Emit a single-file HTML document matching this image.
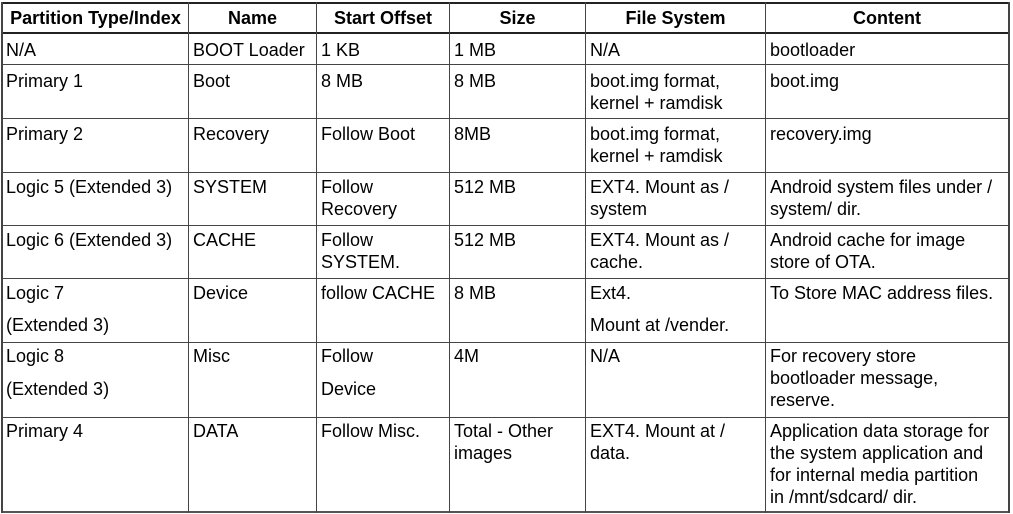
<!DOCTYPE html>
<html><head><meta charset="utf-8"><style>
html,body{margin:0;padding:0;background:#fff;}
body{width:1013px;height:514px;position:relative;overflow:hidden;font-family:"Liberation Sans",Arial,sans-serif;font-size:18px;line-height:22px;color:#000;}
.h{position:absolute;background:#222;}
.t{position:absolute;white-space:nowrap;}
.b{font-weight:bold;text-align:center;}
</style></head><body>
<div class="h" style="left:1px;top:2px;width:1009px;height:2px"></div>
<div class="h" style="left:1px;top:32px;width:1009px;height:2px"></div>
<div class="h" style="left:1px;top:64px;width:1009px;height:1px;background:#444"></div>
<div class="h" style="left:1px;top:118px;width:1009px;height:1px;background:#444"></div>
<div class="h" style="left:1px;top:172px;width:1009px;height:1px;background:#444"></div>
<div class="h" style="left:1px;top:225px;width:1009px;height:1px;background:#444"></div>
<div class="h" style="left:1px;top:278px;width:1009px;height:1px;background:#444"></div>
<div class="h" style="left:1px;top:342px;width:1009px;height:1px;background:#444"></div>
<div class="h" style="left:1px;top:417px;width:1009px;height:1px;background:#444"></div>
<div class="h" style="left:1px;top:511px;width:1009px;height:2px;background:#555"></div>
<div class="h" style="left:1px;top:2px;width:2px;height:511px;background:#444"></div>
<div class="h" style="left:188px;top:2px;width:1px;height:511px;background:#444"></div>
<div class="h" style="left:316px;top:2px;width:1px;height:511px;background:#444"></div>
<div class="h" style="left:449px;top:2px;width:1px;height:511px;background:#444"></div>
<div class="h" style="left:585px;top:2px;width:1px;height:511px;background:#444"></div>
<div class="h" style="left:765px;top:2px;width:1px;height:511px;background:#444"></div>
<div class="h" style="left:1008px;top:2px;width:2px;height:511px;background:#444"></div>
<div class="t b" style="left:3px;top:7px;width:185px">Partition Type/Index</div>
<div class="t b" style="left:189px;top:7px;width:127px">Name</div>
<div class="t b" style="left:317px;top:7px;width:132px">Start Offset</div>
<div class="t b" style="left:450px;top:7px;width:135px">Size</div>
<div class="t b" style="left:586px;top:7px;width:179px">File System</div>
<div class="t b" style="left:766px;top:7px;width:242px">Content</div>
<div class="t" style="left:6px;top:39px">N/A</div>
<div class="t" style="left:193px;top:39px">BOOT Loader</div>
<div class="t" style="left:321px;top:39px">1 KB</div>
<div class="t" style="left:454px;top:39px">1 MB</div>
<div class="t" style="left:590px;top:39px">N/A</div>
<div class="t" style="left:770px;top:39px">bootloader</div>
<div class="t" style="left:6px;top:70px">Primary 1</div>
<div class="t" style="left:193px;top:70px">Boot</div>
<div class="t" style="left:321px;top:70px">8 MB</div>
<div class="t" style="left:454px;top:70px">8 MB</div>
<div class="t" style="left:590px;top:70px">boot.img format,<br>kernel + ramdisk</div>
<div class="t" style="left:770px;top:70px">boot.img</div>
<div class="t" style="left:6px;top:123px">Primary 2</div>
<div class="t" style="left:193px;top:123px">Recovery</div>
<div class="t" style="left:321px;top:123px">Follow Boot</div>
<div class="t" style="left:454px;top:123px">8MB</div>
<div class="t" style="left:590px;top:123px">boot.img format,<br>kernel + ramdisk</div>
<div class="t" style="left:770px;top:123px">recovery.img</div>
<div class="t" style="left:6px;top:176px">Logic 5 (Extended 3)</div>
<div class="t" style="left:193px;top:176px">SYSTEM</div>
<div class="t" style="left:321px;top:176px">Follow<br>Recovery</div>
<div class="t" style="left:454px;top:176px">512 MB</div>
<div class="t" style="left:590px;top:176px">EXT4. Mount as /<br>system</div>
<div class="t" style="left:770px;top:176px">Android system files under /<br>system/ dir.</div>
<div class="t" style="left:6px;top:229px">Logic 6 (Extended 3)</div>
<div class="t" style="left:193px;top:229px">CACHE</div>
<div class="t" style="left:321px;top:229px">Follow<br>SYSTEM.</div>
<div class="t" style="left:454px;top:229px">512 MB</div>
<div class="t" style="left:590px;top:229px">EXT4. Mount as /<br>cache.</div>
<div class="t" style="left:770px;top:229px">Android cache for image<br>store of OTA.</div>
<div class="t" style="left:6px;top:282px">Logic 7</div>
<div class="t" style="left:6px;top:314px">(Extended 3)</div>
<div class="t" style="left:193px;top:282px">Device</div>
<div class="t" style="left:321px;top:282px">follow CACHE</div>
<div class="t" style="left:454px;top:282px">8 MB</div>
<div class="t" style="left:590px;top:282px">Ext4.</div>
<div class="t" style="left:590px;top:314px">Mount at /vender.</div>
<div class="t" style="left:770px;top:282px">To Store MAC address files.</div>
<div class="t" style="left:6px;top:345px">Logic 8</div>
<div class="t" style="left:6px;top:378px">(Extended 3)</div>
<div class="t" style="left:321px;top:345px">Follow</div>
<div class="t" style="left:321px;top:378px">Device</div>
<div class="t" style="left:193px;top:345px">Misc</div>
<div class="t" style="left:454px;top:345px">4M</div>
<div class="t" style="left:590px;top:345px">N/A</div>
<div class="t" style="left:770px;top:345px">For recovery store<br>bootloader message,<br>reserve.</div>
<div class="t" style="left:6px;top:420px">Primary 4</div>
<div class="t" style="left:193px;top:420px">DATA</div>
<div class="t" style="left:321px;top:420px">Follow Misc.</div>
<div class="t" style="left:454px;top:420px">Total - Other<br>images</div>
<div class="t" style="left:590px;top:420px">EXT4. Mount at /<br>data.</div>
<div class="t" style="left:770px;top:420px">Application data storage for<br>the system application and<br>for internal media partition<br>in /mnt/sdcard/ dir.</div>
</body></html>
